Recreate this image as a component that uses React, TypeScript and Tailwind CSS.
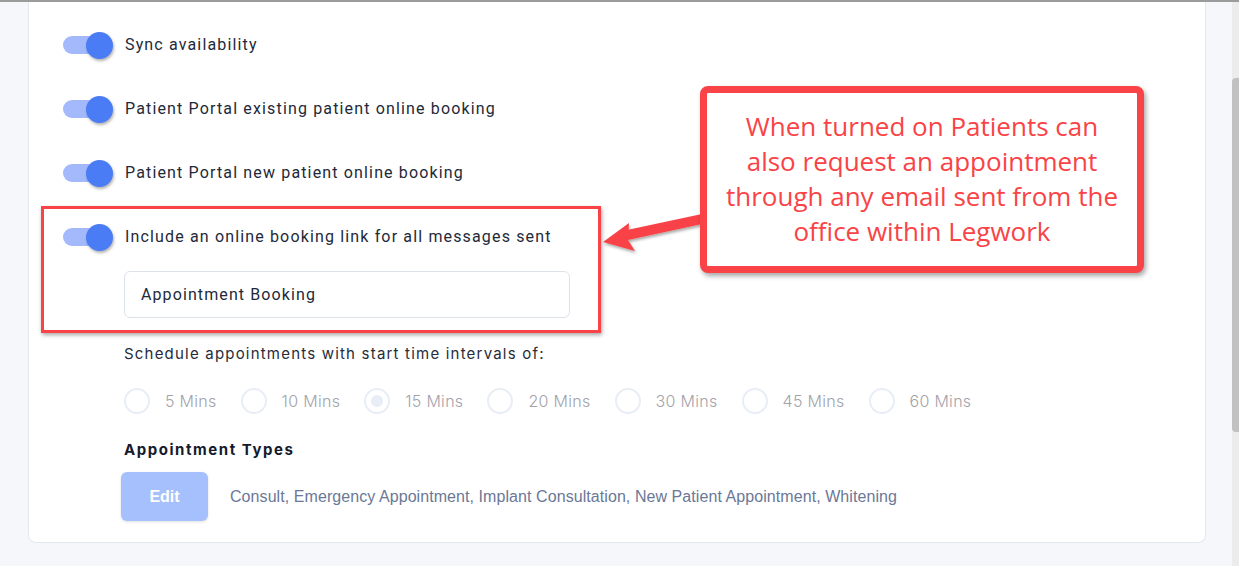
import React from "react";

const toggles = [
  "Sync availability",
  "Patient Portal existing patient online booking",
  "Patient Portal new patient online booking",
];

const intervals = ["5 Mins", "10 Mins", "15 Mins", "20 Mins", "30 Mins", "45 Mins", "60 Mins"];

const Toggle: React.FC = () => (
  <div className="relative w-[50px] h-[26px] shrink-0">
    <div className="absolute left-0 top-[4px] w-[44px] h-[18px] rounded-full bg-[#a3b9fb]" />
    <div className="absolute right-0 top-0 w-[27px] h-[27px] rounded-full bg-[#4a7cf6] shadow-[1px_2px_3px_rgba(0,0,0,0.3)]" />
  </div>
);

const ToggleRow: React.FC<{ label: string }> = ({ label }) => (
  <div className="flex items-center gap-3 h-[26px]">
    <Toggle />
    <span className="text-[16px] tracking-[1.15px] text-[#1e2939] font-['Roboto',sans-serif]">{label}</span>
  </div>
);

const App: React.FC = () => {
  return (
    <div className="relative w-[1239px] h-[566px] flex flex-col overflow-hidden bg-[#f5f7fb]">
      <div className="h-[2px] bg-[#9b9b9b]" />
      <div className="flex flex-1 min-h-0">
        <div className="flex-1 pl-[28px] pr-[26px] pb-[23px]">
          <div className="h-full bg-white border border-t-0 border-[#e2e7f0] rounded-b-lg pl-[34px] pt-[30px]">
            <div className="flex flex-col gap-[38px]">
              {toggles.map((t) => (
                <ToggleRow key={t} label={t} />
              ))}
              <ToggleRow label="Include an online booking link for all messages sent" />
            </div>

            <div className="ml-[61px] mt-[21px] w-[446px] h-[47px] flex items-center px-4 border border-[#dde2ea] rounded-md text-[16px] tracking-[1.1px] text-[#1e2939] font-['Roboto',sans-serif]">
              Appointment Booking
            </div>

            <div className="ml-[61px] mt-[25px] text-[15px] tracking-[1.2px] text-[#262c3a] font-['Inter',sans-serif]">
              Schedule appointments with start time intervals of:
            </div>

            <div className="ml-[61px] mt-[22px] flex items-center gap-6">
              {intervals.map((m) => (
                <div key={m} className="flex items-center gap-[15px]">
                  <div className="w-[26px] h-[26px] rounded-full border-2 border-[#e8edf6] flex items-center justify-center">
                    {m === "15 Mins" && <div className="w-[12px] h-[12px] rounded-full bg-[#e8edf6]" />}
                  </div>
                  <span className="text-[16px] tracking-[0.3px] font-light text-[#a3a3ab] font-['Inter',sans-serif]">{m}</span>
                </div>
              ))}
            </div>

            <div className="ml-[61px] mt-[25px] text-[15px] font-bold tracking-[1.55px] text-[#141b2d] font-['Inter',sans-serif]">
              Appointment Types
            </div>

            <div className="ml-[58px] mt-[11px] flex items-center gap-[22px]">
              <div className="w-[87px] h-[49px] rounded-md bg-[#a6bffd] shadow-[0_1px_3px_rgba(0,0,0,0.12)] flex items-center justify-center text-white font-bold text-[16px] font-['Liberation_Sans',sans-serif]">
                Edit
              </div>
              <span className="text-[16px] tracking-[0.07px] text-[#6b7896] font-['Liberation_Sans',sans-serif]">
                Consult, Emergency Appointment, Implant Consultation, New Patient Appointment, Whitening
              </span>
            </div>
          </div>
        </div>
        <div className="w-[7px] bg-[#ececec] flex flex-col pt-[76px]">
          <div className="h-[354px] bg-[#c1c1c1] rounded-l-sm" />
        </div>
      </div>

      {/* annotation: highlight box */}
      <div className="absolute left-[41px] top-[206px] w-[560px] h-[127px] border-[3px] border-[#f94346] shadow-[1px_2px_4px_rgba(0,0,0,0.35)]" />

      {/* annotation: arrow */}
      <svg className="absolute left-0 top-0" width="1239" height="566" viewBox="0 0 1239 566">
        <defs>
          <filter id="sh" x="-10%" y="-10%" width="130%" height="140%">
            <feDropShadow dx="1" dy="2" stdDeviation="1.5" floodColor="#000" floodOpacity="0.35" />
          </filter>
        </defs>
        <g filter="url(#sh)" fill="#f94346">
          <polygon points="702,214 702,224 628,240 627,230" />
          <polygon points="603,242 629,223 628,240 635,251" />
        </g>
      </svg>

      {/* annotation: callout */}
      <div className="absolute left-[700px] top-[86px] w-[444px] h-[187px] rounded-lg border-[7px] border-[#f94346] bg-white shadow-[2px_3px_5px_rgba(0,0,0,0.35)] flex items-center justify-center">
        <p className="text-center text-[26px] leading-[35px] text-[#f94346] font-['Open_Sans',sans-serif] pb-[2px]">
          When turned on Patients can
          <br />
          also request an appointment
          <br />
          through any email sent from the
          <br />
          office within Legwork
        </p>
      </div>
    </div>
  );
};

export default App;
